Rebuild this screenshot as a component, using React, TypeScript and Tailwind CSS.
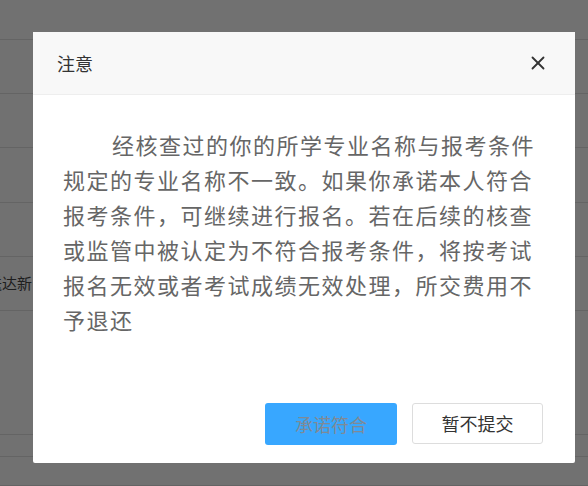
import React from 'react';
import { X } from 'lucide-react';

const rows = [40, 54, 54, 55, 54, 54, 124, 22, 29];

export default function App() {
  return (
    <div className="relative h-[486px] w-[588px] overflow-hidden bg-[#717171] font-['Noto_Sans_CJK_SC',sans-serif]">
      {/* Background page (dimmed) */}
      <div className="flex flex-col">
        {rows.map((h, i) => (
          <div
            key={i}
            className="flex items-center border-b border-[#646464] text-[15px] text-[#1e1e1e]"
            style={{ height: h }}
          >
            {i === 5 && <span className="-ml-[13px] whitespace-nowrap">送达新</span>}
          </div>
        ))}
      </div>

      {/* Modal */}
      <div className="absolute left-[33px] top-[32px] flex h-[431px] w-[542px] flex-col rounded-[2px] bg-white">
        <div className="flex h-[63px] items-center justify-between border-b border-[#eeeeee] bg-[#f8f8f8] pl-[24px] pr-[26px]">
          <span className="text-[18px] text-[#333333]">注意</span>
          <X size={22} strokeWidth={2} className="text-[#333333]" />
        </div>
        <div className="flex-1 px-[30px] pt-[32px]">
          <p className="indent-[49px] text-[22px] leading-[35px] tracking-[1.5px] text-[#666666]">
            经核查过的你的所学专业名称与报考条件规定的专业名称不一致。如果你承诺本人符合报考条件，可继续进行报名。若在后续的核查或监管中被认定为不符合报考条件，将按考试报名无效或者考试成绩无效处理，所交费用不予退还
          </p>
        </div>
        <div className="flex justify-end gap-[15px] pb-[18px] pr-[32px]">
          <button className="h-[42px] w-[132px] rounded-[3px] bg-[#38a7ff] text-[18px] text-[#7f8a96]">
            承诺符合
          </button>
          <button className="h-[41px] w-[131px] rounded-[3px] border border-[#dddddd] bg-white text-[18px] text-[#333333]">
            暂不提交
          </button>
        </div>
      </div>
    </div>
  );
}
